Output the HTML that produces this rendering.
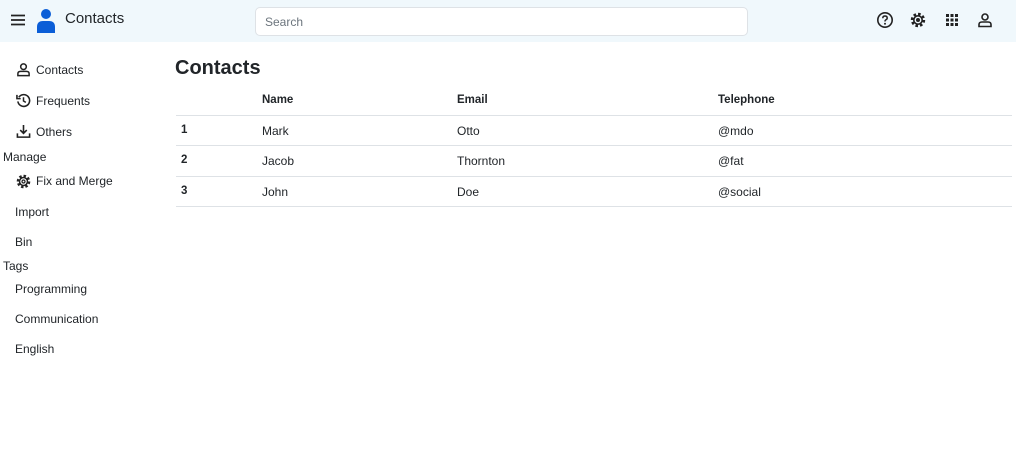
<!DOCTYPE html>
<html><head><style>
body{margin:0;width:1024px;height:476px;background:#fff;font-family:"Liberation Sans",sans-serif;color:#212529;overflow:hidden;position:relative}
.hdr{position:absolute;left:0;top:0;width:1016px;height:42px;background:#f0f8fc}
.t{position:absolute;font-size:12px;white-space:nowrap}
svg{position:absolute}
.line{position:absolute;left:176px;width:836px;height:1px;background:#dee2e6}
</style></head><body>
<div class="hdr"></div>
<svg style="left:10px;top:13px" width="16" height="14" viewBox="0 0 16 14"><path d="M1 2.5H15M1 7H15M1 11.5H15" stroke="#222" stroke-width="1.7"/></svg>
<svg style="left:35px;top:8px" width="22" height="26" viewBox="0 0 22 26"><circle cx="11" cy="6" r="5" fill="#0b5ed7"/><path d="M2 25V19Q2 13 8 13H14Q20 13 20 19V25Z" fill="#0b5ed7"/></svg>
<div class="t" style="left:65px;top:10px;font-size:15px">Contacts</div>
<div style="position:absolute;left:255px;top:7px;width:491px;height:27px;border:1px solid #dee2e6;border-radius:5px;background:#fff"></div>
<div class="t" style="left:265px;top:15px;color:#6c757d;font-size:12px">Search</div>
<svg style="left:876px;top:11px" width="18" height="18" viewBox="0 0 18 18"><circle cx="9" cy="9" r="7.2" fill="none" stroke="#222" stroke-width="1.6"/><path d="M6.8 7.2Q6.8 5 9 5Q11.2 5 11.2 7Q11.2 8.3 9.6 9Q9 9.4 9 10.5" fill="none" stroke="#222" stroke-width="1.5"/><circle cx="9" cy="12.8" r="1" fill="#222"/></svg>
<svg style="left:909px;top:11px" width="18" height="18" viewBox="0 0 18 18"><circle cx="9" cy="9" r="5.5" fill="none" stroke="#222" stroke-width="3.4" stroke-dasharray="2.4 1.9"/><circle cx="9" cy="9" r="4.2" fill="none" stroke="#222" stroke-width="1.6"/><circle cx="9" cy="9" r="2" fill="#222"/></svg>
<svg style="left:945px;top:13px" width="14" height="14" viewBox="0 0 14 14" fill="#222"><rect x="1" y="1" width="3" height="3"/><rect x="5.5" y="1" width="3" height="3"/><rect x="10" y="1" width="3" height="3"/><rect x="1" y="5.5" width="3" height="3"/><rect x="5.5" y="5.5" width="3" height="3"/><rect x="10" y="5.5" width="3" height="3"/><rect x="1" y="10" width="3" height="3"/><rect x="5.5" y="10" width="3" height="3"/><rect x="10" y="10" width="3" height="3"/></svg>
<svg style="left:977px;top:12px" width="16" height="16" viewBox="0 0 16 16"><circle cx="8" cy="5" r="3" fill="none" stroke="#222" stroke-width="1.6"/><path d="M2 14.5V12.5Q2 10 5 10H11Q14 10 14 12.5V14.5Z" fill="none" stroke="#222" stroke-width="1.6"/></svg>

<svg style="left:16px;top:62px" width="15" height="15" viewBox="0 0 16 16"><circle cx="8" cy="5" r="3" fill="none" stroke="#222" stroke-width="1.6"/><path d="M2 14.5V12.5Q2 10 5 10H11Q14 10 14 12.5V14.5Z" fill="none" stroke="#222" stroke-width="1.6"/></svg>
<div class="t" style="left:36px;top:63px">Contacts</div>
<svg style="left:16px;top:93px" width="15" height="15" viewBox="0 0 16 16"><path d="M3 4.5A6.3 6.3 0 1 1 2 9" fill="none" stroke="#222" stroke-width="1.7"/><path d="M1 2V6H5" fill="none" stroke="#222" stroke-width="1.7"/><path d="M8 4.5V8.5L10.5 10" fill="none" stroke="#222" stroke-width="1.6"/></svg>
<div class="t" style="left:36px;top:94px">Frequents</div>
<svg style="left:16px;top:124px" width="15" height="15" viewBox="0 0 16 16"><path d="M8 1V10M4.5 6.5L8 10L11.5 6.5M1.5 10V14H14.5V10" fill="none" stroke="#222" stroke-width="1.7"/></svg>
<div class="t" style="left:36px;top:125px">Others</div>
<div class="t" style="left:3px;top:150px">Manage</div>
<svg style="left:15px;top:173px" width="17" height="17" viewBox="0 0 18 18"><circle cx="9" cy="9" r="5.5" fill="none" stroke="#222" stroke-width="3.4" stroke-dasharray="2.4 1.9"/><circle cx="9" cy="9" r="4.2" fill="none" stroke="#222" stroke-width="1.6"/><circle cx="9" cy="9" r="1.6" fill="none" stroke="#222" stroke-width="1.3"/></svg>
<div class="t" style="left:36px;top:174px">Fix and Merge</div>
<div class="t" style="left:15px;top:205px">Import</div>
<div class="t" style="left:15px;top:235px">Bin</div>
<div class="t" style="left:3px;top:259px">Tags</div>
<div class="t" style="left:15px;top:282px">Programming</div>
<div class="t" style="left:15px;top:312px">Communication</div>
<div class="t" style="left:15px;top:342px">English</div>

<div class="t" style="left:175px;top:57px;font-size:20px;font-weight:bold">Contacts</div>
<div class="t" style="left:262px;top:94px;font-weight:bold;font-size:11.5px">Name</div>
<div class="t" style="left:457px;top:94px;font-weight:bold;font-size:11.5px">Email</div>
<div class="t" style="left:718px;top:94px;font-weight:bold;font-size:11.5px">Telephone</div>
<div class="line" style="top:115px"></div>
<div class="t" style="left:181px;top:124px;font-weight:bold;font-size:11.5px">1</div>
<div class="t" style="left:262px;top:124px">Mark</div>
<div class="t" style="left:457px;top:124px">Otto</div>
<div class="t" style="left:718px;top:124px">@mdo</div>
<div class="line" style="top:145px"></div>
<div class="t" style="left:181px;top:154px;font-weight:bold;font-size:11.5px">2</div>
<div class="t" style="left:262px;top:154px">Jacob</div>
<div class="t" style="left:457px;top:154px">Thornton</div>
<div class="t" style="left:718px;top:154px">@fat</div>
<div class="line" style="top:176px"></div>
<div class="t" style="left:181px;top:185px;font-weight:bold;font-size:11.5px">3</div>
<div class="t" style="left:262px;top:185px">John</div>
<div class="t" style="left:457px;top:185px">Doe</div>
<div class="t" style="left:718px;top:185px">@social</div>
<div class="line" style="top:206px"></div>
</body></html>
